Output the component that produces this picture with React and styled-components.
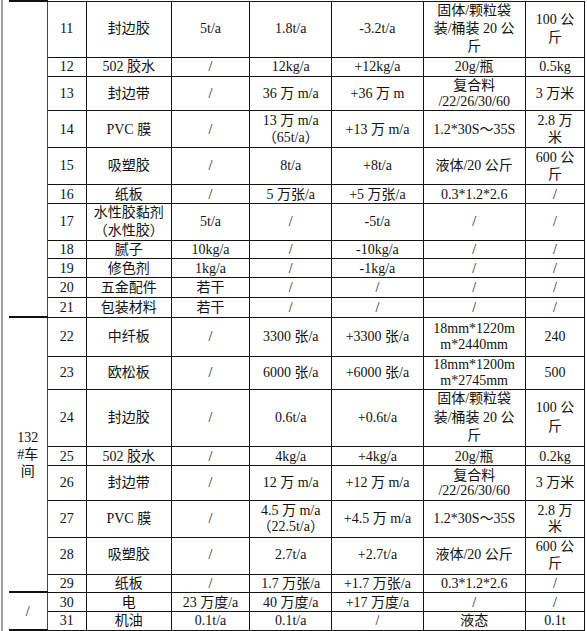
import styled, { createGlobalStyle } from 'styled-components';

const GlobalStyle = createGlobalStyle`
  html, body {
    margin: 0;
    padding: 0;
    background: #fff;
  }
  body {
    font-family: 'Liberation Serif', 'Noto Sans CJK SC', serif;
    color: #111;
  }
`;

const widths = [38, 39, 85, 78, 82, 91, 102, 59];

// [row height, line spacing, no, name, before, after, change, spec, stock]
const rows = [
  [56, 18.3, '11', '封边胶', '5t/a', '1.8t/a', '-3.2t/a', '固体/颗粒袋\n装/桶装 20 公\n斤', '100 公\n斤'],
  [19.3, 17, '12', '502 胶水', '/', '12kg/a', '+12kg/a', '20g/瓶', '0.5kg'],
  [34.7, 15.7, '13', '封边带', '/', '36 万 m/a', '+36 万 m', '复合料\n/22/26/30/60', '3 万米'],
  [36.6, 17.3, '14', 'PVC 膜', '/', '13 万 m/a\n（65t/a）', '+13 万 m/a', '1.2*30S～35S', '2.8 万\n米'],
  [37, 17.3, '15', '吸塑胶', '/', '8t/a', '+8t/a', '液体/20 公斤', '600 公\n斤'],
  [19, 17, '16', '纸板', '/', '5 万张/a', '+5 万张/a', '0.3*1.2*2.6', '/'],
  [36.7, 17.7, '17', '水性胶黏剂\n（水性胶）', '5t/a', '/', '-5t/a', '/', '/'],
  [18.7, 17, '18', '腻子', '10kg/a', '/', '-10kg/a', '/', '/'],
  [19, 17, '19', '修色剂', '1kg/a', '/', '-1kg/a', '/', '/'],
  [19.6, 17, '20', '五金配件', '若干', '/', '/', '/', '/'],
  [19.6, 17, '21', '包装材料', '若干', '/', '/', '/', '/'],
  [38.9, 15.3, '22', '中纤板', '/', '3300 张/a', '+3300 张/a', '18mm*1220m\nm*2440mm', '240'],
  [33.3, 16, '23', '欧松板', '/', '6000 张/a', '+6000 张/a', '18mm*1200m\nm*2745mm', '500'],
  [55, 18.8, '24', '封边胶', '/', '0.6t/a', '+0.6t/a', '固体/颗粒袋\n装/桶装 20 公\n斤', '100 公\n斤'],
  [19, 17, '25', '502 胶水', '/', '4kg/a', '+4kg/a', '20g/瓶', '0.2kg'],
  [35, 15.7, '26', '封边带', '/', '12 万 m/a', '+12 万 m/a', '复合料\n/22/26/30/60', '3 万米'],
  [36.7, 16, '27', 'PVC 膜', '/', '4.5 万 m/a\n（22.5t/a）', '+4.5 万 m/a', '1.2*30S～35S', '2.8 万\n米'],
  [36.7, 16.7, '28', '吸塑胶', '/', '2.7t/a', '+2.7t/a', '液体/20 公斤', '600 公\n斤'],
  [18.3, 17, '29', '纸板', '/', '1.7 万张/a', '+1.7 万张/a', '0.3*1.2*2.6', '/'],
  [19.3, 17, '30', '电', '23 万度/a', '40 万度/a', '+17 万度/a', '/', '/'],
  [18.4, 17, '31', '机油', '0.1t/a', '0.1t/a', '/', '液态', '0.1t'],
];

// group cells in the first column, keyed by the row index where they start
const groups = {
  0: { span: 11, text: '' },
  11: { span: 8, text: '132\n#车\n间' },
  19: { span: 2, text: '/' },
};

// one block per text line so mixed Latin/CJK fonts can't stretch the rows
function Lines({ text }) {
  if (!text) return null;
  return text.split('\n').map((t, i) => <Line key={i}>{t}</Line>);
}

function App() {
  return (
    <>
      <GlobalStyle />
      <Page>
        <Table>
          <colgroup>
            {widths.map((w, i) => (
              <col key={i} style={{ width: w }} />
            ))}
          </colgroup>
          <tbody>
            {rows.map(([h, lh, ...cells], i) => (
              <Row key={cells[0]} $h={h} $lh={lh}>
                {groups[i] && (
                  <GroupCell rowSpan={groups[i].span}>
                    <Lines text={groups[i].text} />
                  </GroupCell>
                )}
                {cells.map((c, j) => (
                  <Cell key={j}>
                    <Lines text={c} />
                  </Cell>
                ))}
              </Row>
            ))}
          </tbody>
        </Table>
      </Page>
    </>
  );
}

export default App;

const Page = styled.div`
  height: 631px;
  margin-left: 1px;
  padding-left: 6px;
  border-left: 2px solid #9c9c9c;
  box-sizing: border-box;
  overflow: hidden;
`;

const Table = styled.table`
  width: 576px;
  table-layout: fixed;
  border-collapse: collapse;
  font-size: 14px;
  line-height: 17px;
`;

const Row = styled.tr`
  height: ${(p) => p.$h}px;
  --lh: ${(p) => p.$lh}px;
`;

const Cell = styled.td`
  border: 1px solid #141414;
  padding: 0 2px;
  text-align: center;
  vertical-align: middle;
  white-space: pre;
  overflow: hidden;
`;

const GroupCell = styled(Cell)`
  border-left: none;
  border-top: 2px solid #111;
  border-bottom: 2px solid #111;
  border-right-color: #444;

  & > span {
    height: 17px;
    line-height: 17px;
  }
`;

const Line = styled.span`
  display: block;
  height: var(--lh);
  line-height: var(--lh);
  overflow: visible;
`;
